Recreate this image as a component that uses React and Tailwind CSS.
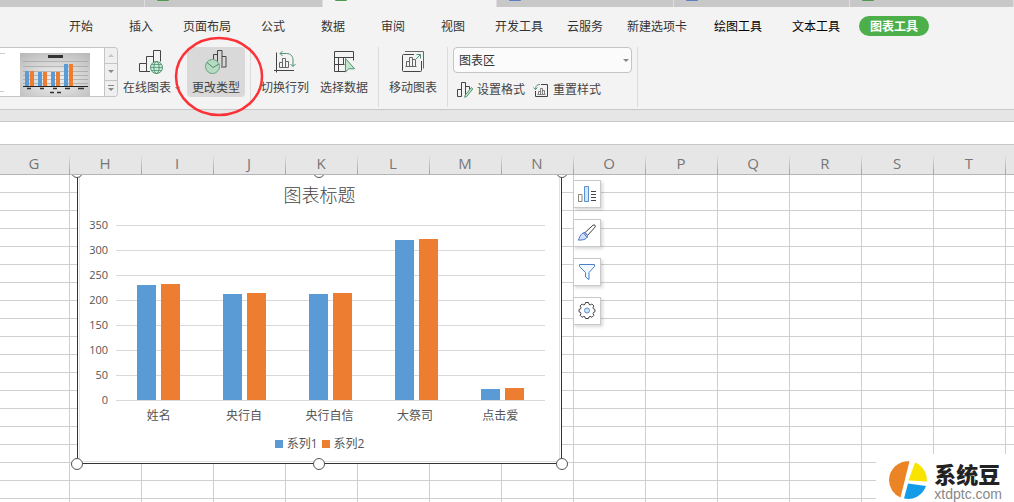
import React, { useState } from 'react';
import clsx from 'clsx';

const docTabs = [
    { width: 'w-[145px]', mark: null },
    { width: 'w-[178px]', mark: 'bg-[#4f9a4c]' },
    { width: 'w-[174px]', mark: 'bg-[#4f9a4c]', active: true },
    { width: 'w-[177px]', mark: 'bg-[#5b7fc0]' },
    { width: 'w-[176px]', mark: 'bg-[#5b7fc0]' },
    { width: 'flex-1', mark: 'bg-[#4f9a4c]' },
];

const menuTabs = ['开始', '插入', '页面布局', '公式', '数据', '审阅', '视图', '开发工具', '云服务', '新建选项卡'];
const toolTabs = ['绘图工具', '文本工具'];

const columns = ['G', 'H', 'I', 'J', 'K', 'L', 'M', 'N', 'O', 'P', 'Q', 'R', 'S', 'T'];
const rowCount = 60;

const series = [
    { name: '姓名', a: 230, b: 233 },
    { name: '央行自', a: 212, b: 214 },
    { name: '央行自信', a: 212, b: 214 },
    { name: '大祭司', a: 320, b: 322 },
    { name: '点击爱', a: 22, b: 24 },
];
const ticks = [350, 300, 250, 200, 150, 100, 50, 0];

const OnlineChartIcon = () => (
    <svg width="24" height="24" viewBox="0 0 24 24" fill="none" stroke="#444">
        <path d="M11 21.500H.5v-8h7v8M7.500 13.500v-7h7v6M14.500 7V.5h7v11" />
        <circle cx="17.500" cy="17.500" r="6" fill="#cfe9d8" stroke="#4f9470" />
        <ellipse cx="17.500" cy="17.500" rx="2.600" ry="6" stroke="#4f9470" />
        <path d="M11.500 17.500h12M12.500 14.500h10M12.500 20.500h10" stroke="#4f9470" strokeWidth=".8" />
    </svg>
);

const ChangeTypeIcon = () => (
    <svg width="24" height="24" viewBox="0 0 24 24" fill="none" stroke="#444">
        <path d="M9.500 9V4.500h4M13.500 13V.5h4.500V16M18 6.500h4V17h-5" />
        <circle cx="8.500" cy="16.500" r="7" fill="#b5dcc3" stroke="#6c9f82" />
        <path d="M3 12.500l6 5 6-3.500" stroke="#4f8a68" />
    </svg>
);

const SwitchIcon = () => (
    <svg width="24" height="24" viewBox="0 0 24 24" fill="none" stroke="#444">
        <path d="M3.500 2.500v20M1 20.500h20" />
        <path d="M6.500 17.500v-5h3v5M9.500 12.500v-4h3v9M12.500 11.500h3v6M6.500 17.500h9" stroke="#666" />
        <path d="M7 3.500h6.500c4 0 6.500 2.500 6.500 6.500v6.500M9.500 1l-2.500 2.500L9.500 6M17.500 14l2.500 2.500 2.500-2.500" stroke="#4f9470" />
    </svg>
);

const SelectDataIcon = () => (
    <svg width="24" height="24" viewBox="0 0 24 24" fill="none" stroke="#444">
        <path d="M13 21.500H2.500v-20h19v9M2.500 7.500h19M2.500 14.500h10M6.500 7.500v14M11.500 7.500v7" />
        <path d="M13.500 8.500v13.500l3.300-3.200h5.700z" fill="#c4e6cf" stroke="#4f9470" />
    </svg>
);

const MoveChartIcon = () => (
    <svg width="24" height="24" viewBox="0 0 24 24" fill="none" stroke="#444">
        <path d="M13 4.500H2.500a1 1 0 0 0-1 1v15a1 1 0 0 0 1 1h17a1 1 0 0 0 1-1V11" />
        <path d="M4 1.500h18.500v17" stroke="#666" />
        <path d="M5.500 16.500v-5h3v5M8.500 11.500v-4h3v9M11.500 9.500h3v7M4.500 16.500h11" stroke="#666" />
        <path d="M15 9l4.500-4.500M15.500 4.500h4v4" stroke="#4f9470" />
    </svg>
);

const FormatIcon = () => (
    <svg width="16" height="16" viewBox="0 0 16 16" fill="none" stroke="#444">
        <path d="M4.500 14.500h-4v-7h4M4.500 14.500v-11M4.500 12V.5h4V13M8.500 4.500h4v3" />
        <path d="M14.500 5.500l1.200 1.500-6 7.500-2 .8.500-2.300z" fill="#c4e6cf" stroke="#4f9470" />
    </svg>
);

const ResetIcon = () => (
    <svg width="16" height="16" viewBox="0 0 16 16" fill="none" stroke="#444">
        <path d="M8 2.500h6.500v12h-12V9" />
        <path d="M5.500 12V9.500h2M7.500 12V6.500h2V12M9.500 8.500h2V12M4.500 12.500h8" stroke="#666" strokeWidth=".8" />
        <path d="M2.500 7.500c0-3 1-5 4.500-5M.5 5.500l2 2 2-2" stroke="#4f9470" />
    </svg>
);

const GalleryThumb = () => (
    <svg width="70" height="43" viewBox="0 0 70 43">
        <defs>
            <radialGradient id="thumbBg" cx=".5" cy=".6" r=".75">
                <stop offset="0" stopColor="#f4f4f4" />
                <stop offset="1" stopColor="#b9b9b9" />
            </radialGradient>
        </defs>
        <rect width="70" height="43" fill="url(#thumbBg)" />
        <path d="M3 8.500h65M3 13.500h65M3 18.500h65M3 22.500h65M3 26.500h65M3 30.500h65" stroke="#9a9a9a" strokeWidth=".6" />
        <rect x="28" y="2" width="15" height="3" fill="#333" />
        <path d="M5 18h4v15H5zM18 19h4v14h-4zM31 19h4v14h-4zM44 11h4v22h-4z" fill="#5b9bd5" />
        <path d="M10 18h4v15h-4zM23 19h4v14h-4zM36 19h4v14h-4zM49 11h4v22h-4z" fill="#ed7d31" />
        <path d="M3 33.500h65" stroke="#222" />
        <path d="M7 35.500h4M20 35.500h4M33 35.500h4M45 35.500h5M58 35.500h6M30 39.500h4M37 39.500h4" stroke="#333" strokeWidth="1.500" />
    </svg>
);

const RibbonButton = ({ label, icon, menu, active }) => (
    <button
        className={clsx(
            'flex h-[50px] shrink-0 flex-col items-center justify-between rounded-sm pt-[3px] text-xs whitespace-nowrap',
            menu ? 'w-16 pl-[5px]' : 'w-[58px]',
            active && 'bg-[#d9d9d9]'
        )}
    >
        <span className={clsx(menu && 'self-start pl-4')}>{icon}</span>
        <span className={clsx('flex items-center gap-1 leading-[18px]', menu && 'self-start')}>
            {label}
            {menu && <svg width="5" height="3" viewBox="0 0 5 3"><path d="M0 0h5L2.500 3z" fill="#888" /></svg>}
        </span>
    </button>
);

const Divider = () => <div className="mx-[5px] h-[60px] w-px shrink-0 bg-[#dcdcdc]" />;

const Ribbon = () => {
    const [area, setArea] = useState('图表区');

    return (
        <header className="shrink-0 border-b border-[#c8c8c8] bg-[#f3f3f3] text-[#444]">
            <nav className="flex h-[38px] items-center pl-[51px] text-xs whitespace-nowrap text-[#333]">
                {menuTabs.map(t => (
                    <button key={t} className="min-w-[60px] shrink-0 px-3 pt-0.5">{t}</button>
                ))}
                {toolTabs.map(t => (
                    <button key={t} className="shrink-0 px-[15px] pt-0.5 text-black">{t}</button>
                ))}
                <button className="ml-1 h-5 shrink-0 rounded-full bg-[#4caf4a] px-[11px] pt-px leading-5 font-bold text-white">图表工具</button>
            </nav>

            <div className="flex h-16 items-start pt-0.5">
                {/* Style gallery */}
                <div className="flex h-[50px] w-[118px] shrink-0 overflow-hidden rounded-r border border-l-0 border-[#c4c4c4] bg-white">
                    <svg width="20" height="48" viewBox="0 0 20 48">
                        <path d="M0 5.500h5M0 43.500h4" stroke="#ccc" />
                    </svg>
                    <div className="flex-1 pt-[5px]"><GalleryThumb /></div>
                    <div className="flex w-[13px] flex-col divide-y divide-[#c4c4c4] border-l border-[#c4c4c4] bg-[#efefef]">
                        <button aria-label="上一行" className="flex flex-1 items-center justify-center">
                            <svg width="6" height="3" viewBox="0 0 6 3"><path d="M0 3h6L3 0z" fill="#c4c4c4" /></svg>
                        </button>
                        <button aria-label="下一行" className="flex flex-1 items-center justify-center">
                            <svg width="6" height="3" viewBox="0 0 6 3"><path d="M0 0h6L3 3z" fill="#888" /></svg>
                        </button>
                        <button aria-label="更多" className="flex flex-1 items-center justify-center">
                            <svg width="6" height="7" viewBox="0 0 6 7"><path d="M0 0h6v1H0zM0 3h6L3 6z" fill="#888" /></svg>
                        </button>
                    </div>
                </div>

                <RibbonButton label="在线图表" icon={<OnlineChartIcon />} menu />
                <div className="relative ml-[5px] shrink-0">
                    <RibbonButton label="更改类型" icon={<ChangeTypeIcon />} active />
                    <svg className="pointer-events-none absolute -top-[12px] -left-[14px] z-10" width="92" height="84" viewBox="0 0 92 84">
                        <ellipse cx="46" cy="41.500" rx="43" ry="38.500" fill="none" stroke="#fb3338" strokeWidth="2.500" />
                    </svg>
                </div>
                <Divider />
                <div className="flex gap-px">
                    <RibbonButton label="切换行列" icon={<SwitchIcon />} />
                    <RibbonButton label="选择数据" icon={<SelectDataIcon />} />
                </div>
                <Divider />
                <RibbonButton label="移动图表" icon={<MoveChartIcon />} />
                <Divider />

                <div className="w-[179px] shrink-0">
                    <div className="relative">
                        <select
                            aria-label="图表元素"
                            value={area}
                            onChange={e => setArea(e.target.value)}
                            className="block h-[26px] w-full appearance-none rounded border border-[#c4c4c4] bg-[#fbfbfb] px-[5px] pt-0.5 text-xs text-[#333]"
                        >
                            <option>图表区</option>
                        </select>
                        <svg className="pointer-events-none absolute top-3 right-[3px]" width="6" height="3" viewBox="0 0 6 3">
                            <path d="M0 0h6L3 3z" fill="#888" />
                        </svg>
                    </div>
                    <div className="mt-2 flex gap-2 pl-1 text-xs leading-[18px] whitespace-nowrap">
                        <button className="flex items-center gap-1"><FormatIcon />设置格式</button>
                        <button className="flex items-center gap-1"><ResetIcon />重置样式</button>
                    </div>
                </div>
                <Divider />
            </div>
        </header>
    );
};

const Handle = ({ className }) => (
    <span className={clsx('absolute size-3 rounded-full border border-[#555] bg-white', className)} />
);

const Chart = () => (
    <figure className="absolute -top-[3px] left-[77px] w-[485px] border border-[#333] bg-white text-[#555]">
        <div className="m-px border border-[#e2e2e2] pt-1.5 pb-1">
            <figcaption className="text-center text-lg leading-7 font-light text-[#444]">图表标题</figcaption>
            <div className="mt-[3px] flex pr-3.5">
                <ul className="w-9 pr-2 text-right text-[11px] leading-[25px]">
                    {ticks.map(t => <li key={t}>{t}</li>)}
                </ul>
                <div className="mt-[13px] flex-1">
                    <div className="flex h-44 bg-[repeating-linear-gradient(to_bottom,#d9d9d9_0_1px,transparent_1px_25px)]">
                        {series.map(s => (
                            <div key={s.name} className="flex flex-1 items-end justify-center gap-[5px] pb-px">
                                <div className="w-[19px] bg-[#5b9bd5]" style={{ height: s.a / 2 }} />
                                <div className="w-[19px] bg-[#ed7d31]" style={{ height: s.b / 2 }} />
                            </div>
                        ))}
                    </div>
                    <div className="flex pr-0.5 text-center text-xs leading-[30px]">
                        {series.map(s => <span key={s.name} className="flex-1">{s.name}</span>)}
                    </div>
                </div>
            </div>
            <div className="flex items-center justify-center gap-1 text-xs leading-[26px]">
                <span className="size-2 bg-[#5b9bd5]" />系列1
                <span className="size-2 bg-[#ed7d31]" />系列2
            </div>
        </div>
        <Handle className="-top-[7px] -left-[7px]" />
        <Handle className="-top-[7px] left-[235px]" />
        <Handle className="-top-[7px] -right-[7px]" />
        <Handle className="-bottom-[7px] -left-[7px]" />
        <Handle className="-bottom-[7px] left-[235px]" />
        <Handle className="-right-[7px] -bottom-[7px]" />
    </figure>
);

const ElementsIcon = () => (
    <svg width="20" height="20" viewBox="0 0 20 20" fill="none">
        <path d="M1.500 10.500h3.500v7H1.500z" stroke="#8a8578" />
        <path d="M7.500 2.500h4v15h-4z" fill="#cfe6fb" stroke="#5b8fd0" />
        <path d="M14 7.500h5M14 10.500h5M14 13.500h5M14 16.500h5" stroke="#444" />
    </svg>
);

const BrushIcon = () => (
    <svg width="20" height="20" viewBox="0 0 20 20" fill="none">
        <path d="M8 9.500l8-7.300c1.500-1 3 .5 2 2L10.500 12.500z" stroke="#444" />
        <path d="M8 9.500l2.500 3c.3 3-3.500 5-9.500 4.500 2-1.500 1.800-7 7-7.500zM6.500 10l3.700 4.500" fill="#cfe0fb" stroke="#4a72c4" />
    </svg>
);

const FunnelIcon = () => (
    <svg width="20" height="20" viewBox="0 0 20 20" fill="none">
        <path d="M2.500 2.500h15v2l-5.500 6v7l-3.500-2.500v-4.500l-6-6z" fill="#f1f8ff" stroke="#4a80c8" />
    </svg>
);

const GearIcon = () => (
    <svg width="20" height="20" viewBox="0 2 20 20" fill="none">
        <path
            d="M8.500 3.500h3l.5 1.900 1.200.5 1.700-.9 2 2-.9 1.700.5 1.200 1.400.4v2.600l-1.400.5-.5 1.200.9 1.700-2 2-1.700-.9-1.200.5-.5 1.600h-3l-.5-1.600-1.200-.5-1.700.9-2-2 .9-1.700-.5-1.200-1.400-.5v-2.600l1.400-.4.5-1.200-.9-1.700 2-2 1.700.9 1.200-.5z"
            stroke="#444"
            strokeLinejoin="round"
        />
        <circle cx="10" cy="11.500" r="2.500" fill="#cfe6fb" stroke="#5b8fd0" />
    </svg>
);

const chartTools = [
    { label: '图表元素', icon: <ElementsIcon /> },
    { label: '图表样式', icon: <BrushIcon /> },
    { label: '图表筛选器', icon: <FunnelIcon /> },
    { label: '设置图表区域格式', icon: <GearIcon /> },
];

const Watermark = () => (
    <div className="absolute right-0 bottom-0 flex items-start bg-white pt-1.5 pr-3 pb-0.5 pl-3 whitespace-nowrap">
        <svg width="40" height="40" viewBox="0 0 40 40">
            <path d="M21.500 1.200A19 19 0 0 0 1 20A19 19 0 0 0 12.500 37.500z" fill="#ea8424" />
            <path d="M27 2.500A19 19 0 0 1 38.800 21.500L20.500 20.500z" fill="#f9e400" />
            <path d="M20 23.500L38 26A19 19 0 0 1 16 38.500z" fill="#149ce8" />
        </svg>
        <div className="ml-1.5">
            <div className="text-[22px] leading-7 font-black text-[#222]">系统豆</div>
            <div className="font-['Liberation_Sans',sans-serif] text-sm leading-3 text-[#888]">xtdptc.com</div>
        </div>
    </div>
);

const Sheet = () => (
    <main className="relative min-h-0 flex-1 overflow-hidden bg-white">
        <table className="w-full table-fixed border-separate border-spacing-0">
            <thead>
                <tr className="h-[30px] bg-[#e6e6e6]">
                    {columns.map((c, i) => (
                        <th
                            key={c}
                            className={clsx(
                                'border-b border-[#b4b4b4] bg-[linear-gradient(to_bottom,transparent,#a0a0a0)] bg-[length:1px_20px] bg-right-bottom bg-no-repeat p-0 pt-1.5 pr-0.5 text-[15px] leading-5 font-normal text-[#777]',
                                i === 0 ? 'w-[70px]' : 'w-[72px]'
                            )}
                        >
                            {c}
                        </th>
                    ))}
                    <th className="border-b border-[#b4b4b4] p-0" />
                </tr>
            </thead>
            <tbody>
                {Array.from({ length: rowCount }, (_, r) => (
                    <tr key={r} className="h-[18px]">
                        {columns.map(c => <td key={c} className="border-r border-b border-[#cfcfcf] p-0" />)}
                        <td className="border-b border-[#cfcfcf] p-0" />
                    </tr>
                ))}
            </tbody>
        </table>

        {/* Objects floating over the cells */}
        <div className="absolute inset-x-0 top-[30px] bottom-0 overflow-hidden">
            <Chart />
            <div className="absolute top-[5px] left-[573px] flex flex-col gap-[11px]">
                {chartTools.map(t => (
                    <button
                        key={t.label}
                        aria-label={t.label}
                        className="flex size-7 items-center justify-center border border-[#c9c9c9] bg-white shadow-[2px_2px_3px_rgba(0,0,0,0.15)]"
                    >
                        {t.icon}
                    </button>
                ))}
            </div>
            <Watermark />
        </div>
    </main>
);

const App = () => {
    return (
        <div className="flex h-screen flex-col overflow-hidden bg-[#e6e6e6] font-['Open_Sans','Noto_Sans_CJK_SC',sans-serif]">
            <div className="flex h-[7px] shrink-0">
                {docTabs.map((t, i) => (
                    <div
                        key={i}
                        className={clsx(
                            'shrink-0 border-r border-[#dedede] pl-3',
                            t.width,
                            t.active ? 'bg-[#f3f3f3]' : 'bg-[#c8c8c8]'
                        )}
                    >
                        {t.mark && <div className={clsx('h-px w-3 rounded-b-sm', t.mark)} />}
                    </div>
                ))}
            </div>
            <Ribbon />
            <div className="mt-[11px] h-6 shrink-0 border-y border-[#c8c8c8] bg-white" />
            <Sheet />
        </div>
    );
};

export default App;
